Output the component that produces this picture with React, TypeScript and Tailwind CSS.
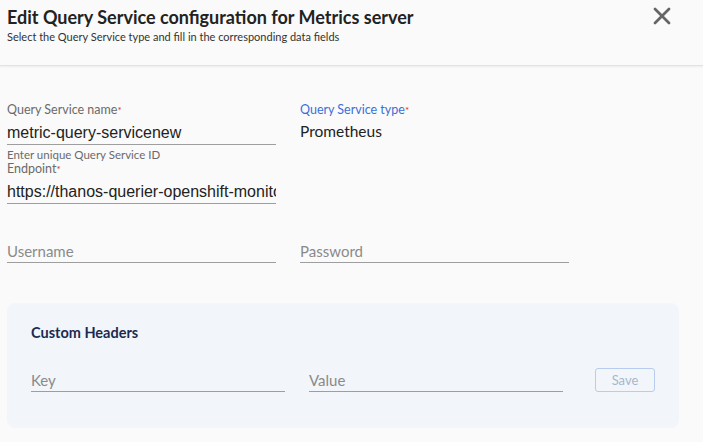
import { X } from 'lucide-react';

const font = { fontFamily: 'Lato, "Noto Sans", sans-serif' };

function Label({ text, active }: { text: string; active?: boolean }) {
  return (
    <div className={`text-[12.5px] leading-[14px] ${active ? 'text-[#3a6fd8]' : 'text-[#6a6a6a]'}`}>
      {text}
      <span className="text-[#d9302c] text-[10px] align-top">*</span>
    </div>
  );
}

function UnderlineInput({ value, placeholder, w = 'w-[269px]' }: { value?: string; placeholder?: string; w?: string }) {
  return (
    <div className={`${w} border-b border-[#9e9e9e] h-[25px] flex items-end pb-[1px] overflow-hidden whitespace-nowrap`}>
      {value ? (
        <span className="text-[16px] leading-[20px] text-[#222]" style={{ fontFamily: '"Liberation Sans", Arial, sans-serif' }}>
          {value}
        </span>
      ) : (
        <span className="text-[15px] leading-[20px] text-[#8a8a8a]">{placeholder}</span>
      )}
    </div>
  );
}

export default function App() {
  return (
    <div className="w-[703px] h-[442px] bg-[#fafafa] overflow-hidden" style={font}>
      {/* Header */}
      <header className="h-[66px] border-b border-[#e2e2e2] shadow-[0_1px_2px_rgba(0,0,0,0.06)] flex justify-between px-[7px]">
        <div className="pt-[5px]">
          <h1 className="text-[18px] leading-[24px] font-bold text-[#222]">Edit Query Service configuration for Metrics server</h1>
          <p className="text-[11px] leading-[16px] text-[#333]">Select the Query Service type and fill in the corresponding data fields</p>
        </div>
        <button className="mr-[20px] mt-[2px] h-[26px] text-[#666]">
          <X size={28} strokeWidth={2.4} />
        </button>
      </header>

      {/* Form */}
      <div className="px-[7px] pt-[37px]">
        <div className="flex gap-[24px]">
          <div className="w-[269px] flex flex-col">
            <Label text="Query Service name" />
            <div className="mt-[3px]">
              <UnderlineInput value="metric-query-servicenew" />
            </div>
            <div className="text-[11.5px] leading-[14px] text-[#6a6a6a] mt-[3px]">Enter unique Query Service ID</div>
            <Label text="Endpoint" />
            <div className="mt-[3px]">
              <UnderlineInput value="https://thanos-querier-openshift-monitoring.apps.cluster.example.com" />
            </div>
          </div>
          <div className="w-[269px] flex flex-col">
            <Label text="Query Service type" active />
            <div className="mt-[4px] text-[15.5px] leading-[20px] text-[#222]">Prometheus</div>
          </div>
        </div>

        <div className="flex gap-[24px] mt-[34px]">
          <UnderlineInput placeholder="Username" />
          <UnderlineInput placeholder="Password" />
        </div>

        {/* Custom headers */}
        <section className="mt-[40px] w-[672px] h-[125px] bg-[#f2f6fa] rounded-[8px] px-[24px] pt-[21px]">
          <h2 className="text-[14.5px] leading-[18px] font-bold text-[#1c2a50]">Custom Headers</h2>
          <div className="flex items-end mt-[25px]">
            <UnderlineInput placeholder="Key" w="w-[254px]" />
            <div className="ml-[24px]">
              <UnderlineInput placeholder="Value" w="w-[254px]" />
            </div>
            <button className="ml-[32px] mb-[0px] w-[60px] h-[24px] rounded-[3px] border border-[#b7ccef] text-[#a8b6cc] text-[13px] leading-[20px]">
              Save
            </button>
          </div>
        </section>
      </div>
    </div>
  );
}
